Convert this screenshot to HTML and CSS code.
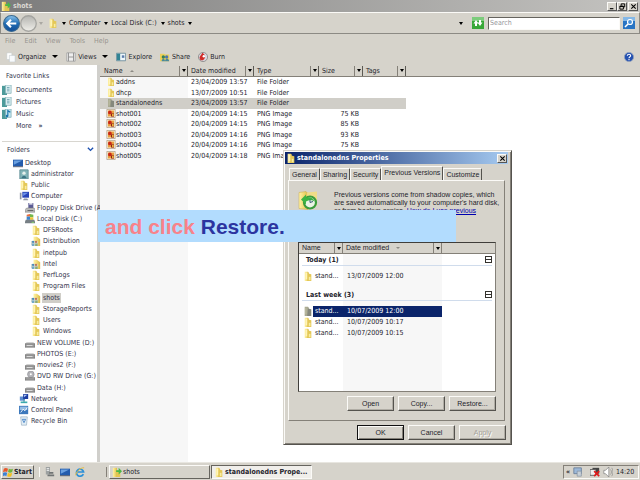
FILE: index.html
```html
<!DOCTYPE html>
<html lang="en">
<head>
<meta charset="utf-8">
<title>shots</title>
<link rel="stylesheet" href="styles.css">
</head>
<body>
<svg class="sprite" aria-hidden="true">
  <defs>
    <linearGradient id="gold" x1="0" x2="1"><stop offset="0" stop-color="#fff3a8"/><stop offset=".55" stop-color="#f0d870"/><stop offset="1" stop-color="#d8b848"/></linearGradient>
    <linearGradient id="blue" x1="0" y1="0" x2="0" y2="1"><stop offset="0" stop-color="#8cc4ec"/><stop offset=".5" stop-color="#1f6cb4"/><stop offset="1" stop-color="#124c94"/></linearGradient>
    <linearGradient id="silver" x1="0" y1="0" x2="0" y2="1"><stop offset="0" stop-color="#b4b4b0"/><stop offset="1" stop-color="#f0efea"/></linearGradient>
  </defs>
  <symbol id="folder" viewBox="0 0 12 12"><path d="M2 1h4l1 1v10H2z" fill="url(#gold)"/><path d="M6 3l4 1v8H5z" fill="#e4c858"/><path d="M3 2h2v8H3z" fill="#fff4b8"/><path d="M7 7h2v4H7z" fill="#f8eca0"/></symbol>
  <symbol id="folder-gray" viewBox="0 0 12 12"><path d="M2 1h4l1 1v10H2z" fill="#a8a890"/><path d="M6 3l4 1v8H5z" fill="#85887c"/><path d="M3 2h1v8H3z" fill="#c4c4a8"/></symbol>
  <symbol id="folder-green" viewBox="0 0 12 12"><path d="M1 1h5v11H1z" fill="url(#gold)"/><path d="M6 4l4 1v7H5z" fill="#e5c650"/><path d="M5 6V4h3V1l4 4-4 4V6z" fill="#48b848"/></symbol>
  <symbol id="folder-shared" viewBox="0 0 12 12"><path d="M3 1h4l4 3v8H3z" fill="url(#gold)"/><path d="M0 6h8v5H0z" fill="#d5d9d0"/><circle cx="2.5" cy="7" r="1.4" fill="#4c8cb8"/><circle cx="6" cy="7" r="1.4" fill="#c07858"/><path d="M1 9h3v3H1z" fill="#73a9c9"/><path d="M5 9h3v3H5z" fill="#8aaa78"/></symbol>
  <symbol id="png" viewBox="0 0 12 12"><path d="M.5.500h11v11H.5z" fill="#fff3dc" stroke="#a89880"/><path d="M2 2h8v8H2z" fill="#e8a040"/><circle cx="4.500" cy="4.500" r="2.500" fill="#c82818"/><path d="M6 6h4v4H6z" fill="#8c1c18"/><circle cx="8.500" cy="8" r="1.300" fill="#f8d040"/></symbol>
  <symbol id="doc" viewBox="0 0 12 12"><path d="M0 1h6v11H0z" fill="#4d9b9b"/><path d="M4 0h7v10H4z" fill="#d9eef0" stroke="#6c9ea6" stroke-width=".7"/><path d="M6 3h3M6 5h3M6 7h3" stroke="#6aa0b0"/></symbol>
  <symbol id="music" viewBox="0 0 12 12"><path d="M0 1h6v11H0z" fill="#4d9b9b"/><path d="M4 0h7v10H4z" fill="#c4e5ee" stroke="#6c9ea6" stroke-width=".7"/><path d="M7 8V2l3 2" fill="none" stroke="#1c78b0" stroke-width="1.400"/><circle cx="6" cy="8.500" r="1.600" fill="#1c78b0"/></symbol>
  <symbol id="desktop" viewBox="0 0 12 12"><path d="M0 2h12v8H0z" fill="#245cac"/><path d="M1 3h10L1 8z" fill="#6aa0e0"/><path d="M0 10h12v1H0z" fill="#424c60"/></symbol>
  <symbol id="user" viewBox="0 0 12 12"><path d="M1 1h10v11H1z" fill="#82b4b8" stroke="#5c8c94"/><circle cx="6" cy="5" r="2" fill="#e6f0ec"/><path d="M3 11c0-4 6-4 6 0z" fill="#3c7484"/></symbol>
  <symbol id="computer" viewBox="0 0 12 12"><path d="M1 2h2v8H1z" fill="#8c94a4"/><path d="M4 1h8v7H4z" fill="#2844b8"/><path d="M5 2h6L5 6z" fill="#6c94e8"/><path d="M6 9h4v1h1v1H5v-1h1z" fill="#8c94a4"/></symbol>
  <symbol id="floppy" viewBox="0 0 12 12"><path d="M4 0h6v6H4z" fill="#5c5c94"/><path d="M5 0h4v2H5z" fill="#dcdce8"/><path d="M2 6h9l1 2v3H0V8z" fill="#bcbcbc" stroke="#747474" stroke-width=".6"/><path d="M3 9h7" stroke="#555"/></symbol>
  <symbol id="disk-c" viewBox="0 0 12 12"><path d="M2 1l4-1v3H2z" fill="#e86c38"/><path d="M6 0l4 1v3H6z" fill="#74b84c"/><path d="M2 3h4v4H2z" fill="#3c84cc"/><path d="M6 4h4v3H6z" fill="#f4c438"/><path d="M1 7h10l1 2v2H0V9z" fill="#777f85"/><path d="M8 10h3" stroke="#8ce46c"/></symbol>
  <symbol id="drive" viewBox="0 0 12 12"><path d="M2 5h8l2 2v4H0V7z" fill="#c4c4c4"/><path d="M0 7h12v4H0z" fill="#9c9c9c" stroke="#686868" stroke-width=".7"/><path d="M2 9h7" stroke="#e8e8e8"/></symbol>
  <symbol id="dvd" viewBox="0 0 12 12"><circle cx="7" cy="4" r="4" fill="#b4b4b8" stroke="#84848c" stroke-width=".6"/><circle cx="7" cy="4" r="1.200" fill="#fff"/><path d="M0 8h12v3H0z" fill="#a0a0a0" stroke="#686868" stroke-width=".7"/></symbol>
  <symbol id="network" viewBox="0 0 12 12"><path d="M1 3h6v5H1z" fill="#5c8cd0"/><path d="M5 0h6v6H5z" fill="#1c3ca0"/><path d="M6 1h4L6 4z" fill="#a8c4f4"/><path d="M2 9h8v2H2z" fill="#3cacb0"/><path d="M6 6v4" stroke="#348c94"/></symbol>
  <symbol id="control" viewBox="0 0 12 12"><path d="M0 1h11v10H0z" fill="#3c78bc"/><path d="M1 2h9v4H1z" fill="#94bce4"/><path d="M2 9l3-4 2 2 3-4" fill="none" stroke="#fff"/></symbol>
  <symbol id="bin" viewBox="0 0 12 12"><path d="M2 1h8l-1 10H3z" fill="#e2eef6" stroke="#8ca4b8" stroke-width=".7"/><path d="M4 4h4L6 8z" fill="none" stroke="#3c7cc4"/></symbol>
  <symbol id="back" viewBox="0 0 16 16"><circle cx="8" cy="8" r="7.500" fill="url(#blue)" stroke="#3b6a90"/><path d="M12.500 8H4M7.500 4.500L4 8l3.500 3.500" fill="none" stroke="#fff" stroke-width="2"/></symbol>
  <symbol id="forward" viewBox="0 0 16 16"><circle cx="8" cy="8" r="7.300" fill="url(#silver)" stroke="#a4a4a0" stroke-width="1.200"/></symbol>
  <symbol id="refresh" viewBox="0 0 12 12"><path d="M0 0h12v12H0z" fill="#38a838"/><path d="M0 0h12v4H0z" fill="#7ccc7c"/><path d="M10.500 5.500L8 9 5.500 5.500H7V3h2v2.500zM1.500 6.500L4 3l2.500 3.500H5V9H3V6.500z" fill="#fff"/></symbol>
  <symbol id="search" viewBox="0 0 12 12"><path d="M0 0h12v12H0z" fill="#2874c4"/><path d="M0 0h12v4H0z" fill="#84b8e8"/><circle cx="7" cy="5" r="2.500" fill="#4890d8" stroke="#fff" stroke-width="1.200"/><path d="M5 7L2 10" stroke="#fff" stroke-width="1.600"/></symbol>
  <symbol id="organize" viewBox="0 0 12 12"><path d="M1 1h6v8H1z" fill="#fff" stroke="#c2c8cc" stroke-width=".6"/><path d="M4 4h7v8H4z" fill="#f8fafc" stroke="#b4bcc2" stroke-width=".6"/></symbol>
  <symbol id="views" viewBox="0 0 12 12"><path d="M1 1h10v10H1z" fill="#eee" stroke="#a0a0a0"/><path d="M3 1v10M9 1v10M3 6h6" stroke="#888"/></symbol>
  <symbol id="explore" viewBox="0 0 12 12"><path d="M.5 1.500h11v9H.5z" fill="#eef6fa" stroke="#688898"/><path d="M1 2h4v8H1z" fill="#328494"/><path d="M7 4h3v3H7z" fill="#5c7cac"/></symbol>
  <symbol id="share" viewBox="0 0 12 12"><path d="M0 2h5l1 1h5v8H0z" fill="#ecd058"/><circle cx="4" cy="6" r="2" fill="#388058"/><circle cx="8" cy="6" r="2" fill="#4c74b0"/><path d="M2 11c0-4 4-4 4 0M6 11c0-4 5-4 5 0" fill="#48889c"/></symbol>
  <symbol id="burn" viewBox="0 0 12 12"><circle cx="6" cy="6" r="5.500" fill="#d8d8e0" stroke="#888"/><path d="M3 10C0 5 4 5 5 1c4 2 5 6 1 9z" fill="#d02c28"/><circle cx="7" cy="5" r="1.500" fill="#fff"/></symbol>
  <symbol id="help" viewBox="0 0 12 12"><circle cx="6" cy="6" r="5.500" fill="#2450b0" stroke="#90a0bc"/><path d="M4 4.500c0-2.500 4-2.500 4 0 0 1.500-2 1-2 3M6 8.500v1.300" fill="none" stroke="#fff" stroke-width="1.300"/></symbol>
  <symbol id="history" viewBox="0 0 20 20"><path d="M1 2l7-1 2 2v16l-9-1z" fill="url(#gold)" stroke="#c8a848" stroke-width=".5"/><path d="M9 2l10-1v14l-9 4z" fill="#efdc88"/><circle cx="12" cy="12" r="6" fill="#eaf4e4" stroke="#3a9c3c" stroke-width="2.200"/><path d="M3 9l5-5v3c4-1 7 0 9 4-3-2-6-2-9 0v3z" fill="#3eb444"/><path d="M12 9v3l3-1" fill="none" stroke="#345c74"/></symbol>
  <symbol id="flag" viewBox="0 0 12 12"><path d="M1 2c2-1.500 3-1 5 0L5 6C4 5 2 5 0 6z" fill="#e8582c"/><path d="M7 2c2 1 3 1 5 0l-1 4c-2 1-3 1-5 0z" fill="#70b43c"/><path d="M0 7c2-1 3-1 5 0l-1 4c-1-1-3-1-4 0z" fill="#3c80d4"/><path d="M6 7c1 1 3 1 5 0l-1 4c-2 1-3 1-5 0z" fill="#f4c020"/></symbol>
  <symbol id="server" viewBox="0 0 12 12"><path d="M1 0h5v9H1z" fill="#9ca0a0"/><path d="M2 2h3M2 4h3" stroke="#fff"/><path d="M5 6h5v2H5zM3 9h8v2H3z" fill="#707474"/></symbol>
  <symbol id="ie" viewBox="0 0 12 12"><path d="M10 8.500A4.300 4.300 0 1 1 10.300 6H3" fill="none" stroke="#2c90d8" stroke-width="2"/><path d="M1 10C0 7 7 0 11 1" fill="none" stroke="#e8bc3c" stroke-width="1.200"/></symbol>
  <symbol id="monitor" viewBox="0 0 12 12"><path d="M1 1h9v7H1z" fill="#9cb8d8" stroke="#667c98"/><path d="M5 5h5v6H5z" fill="#c8d0d8" stroke="#788898" stroke-width=".7"/></symbol>
  <symbol id="offline" viewBox="0 0 12 12"><path d="M3 1h8v7H3z" fill="#444"/><path d="M0 3h7v7H0z" fill="#eee" stroke="#555"/><path d="M5 5l6 6M11 5l-6 6" stroke="#e01c1c" stroke-width="2"/></symbol>
  <symbol id="sound" viewBox="0 0 12 12"><path d="M1 4h2l4-4v12L3 8H1z" fill="#fff" stroke="#777" stroke-width=".8"/><path d="M9 3c1.500 2 1.500 4 0 6M10.500 1c2 3 2 7 0 10" fill="none" stroke="#888" stroke-width=".8"/></symbol>
</svg>

<div class="screen">
  <header class="titlebar">
    <svg class="icon"><use href="#folder-green"/></svg>
    <h1>shots</h1>
    <div class="window-buttons">
      <button class="wbtn" aria-label="Minimize"><svg viewBox="0 0 8 8"><path d="M1 6.500h4" stroke="#000" stroke-width="1.300"/></svg></button>
      <button class="wbtn" aria-label="Restore"><svg viewBox="0 0 8 8"><path d="M2.500 3V1h4v3.500H5M1 3.500h4V7H1zM1 4h4" fill="none" stroke="#000" stroke-width="1.100"/></svg></button>
      <button class="wbtn close" aria-label="Close"><svg viewBox="0 0 8 8"><path d="M1.500 1.500l5 5M6.500 1.500l-5 5" stroke="#000" stroke-width="1.200"/></svg></button>
    </div>
  </header>

  <div class="addressbar">
    <button class="nav" aria-label="Back"><svg><use href="#back"/></svg></button>
    <button class="nav" aria-label="Forward"><svg><use href="#forward"/></svg></button>
    <i class="caret hollow"></i>
    <nav class="crumbs" aria-label="Address">
      <svg class="icon"><use href="#folder"/></svg>
      <i class="caret"></i><a href="#">Computer</a>
      <i class="caret"></i><a href="#">Local Disk (C:)</a>
      <i class="caret"></i><a href="#">shots</a>
      <i class="caret"></i>
    </nav>
    <i class="caret end"></i>
    <button class="square" aria-label="Refresh"><svg><use href="#refresh"/></svg></button>
    <input class="search" type="text" placeholder="Search" aria-label="Search">
    <button class="square" aria-label="Go"><svg><use href="#search"/></svg></button>
  </div>

  <nav class="menubar">
    <button>File</button><button>Edit</button><button>View</button><button>Tools</button><button>Help</button>
  </nav>

  <div class="toolbar">
    <button class="tool"><svg class="icon"><use href="#organize"/></svg>Organize<i class="caret"></i></button>
    <button class="tool"><svg class="icon"><use href="#views"/></svg>Views<i class="caret"></i></button>
    <button class="tool"><svg class="icon"><use href="#explore"/></svg>Explore</button>
    <button class="tool"><svg class="icon"><use href="#share"/></svg>Share</button>
    <button class="tool"><svg class="icon"><use href="#burn"/></svg>Burn</button>
    <button class="tool help" aria-label="Help"><svg class="icon"><use href="#help"/></svg></button>
  </div>

  <div class="content">
    <aside class="sidebar">
      <section class="favorites">
        <h2>Favorite Links</h2>
        <a href="#"><svg class="icon"><use href="#doc"/></svg>Documents</a>
        <a href="#"><svg class="icon"><use href="#doc"/></svg>Pictures</a>
        <a href="#"><svg class="icon"><use href="#music"/></svg>Music</a>
        <a href="#" class="more">More <b>»</b></a>
      </section>
      <section class="folders">
        <h2>Folders <svg viewBox="0 0 8 8"><path d="M1 2l3 3 3-3" fill="none" stroke="#1c50b0" stroke-width="1.600"/></svg></h2>
        <div class="tree">
          <a href="#" class="l0"><svg class="icon"><use href="#desktop"/></svg><span>Desktop</span></a>
          <a href="#" class="l1"><svg class="icon"><use href="#user"/></svg><span>administrator</span></a>
          <a href="#" class="l1"><svg class="icon"><use href="#folder"/></svg><span>Public</span></a>
          <a href="#" class="l1"><svg class="icon"><use href="#computer"/></svg><span>Computer</span></a>
          <a href="#" class="l2"><svg class="icon"><use href="#floppy"/></svg><span>Floppy Disk Drive (A</span></a>
          <a href="#" class="l2"><svg class="icon"><use href="#disk-c"/></svg><span>Local Disk (C:)</span></a>
          <a href="#" class="l3"><svg class="icon"><use href="#folder"/></svg><span>DFSRoots</span></a>
          <a href="#" class="l3"><svg class="icon"><use href="#folder-shared"/></svg><span>Distribution</span></a>
          <a href="#" class="l3"><svg class="icon"><use href="#folder"/></svg><span>inetpub</span></a>
          <a href="#" class="l3"><svg class="icon"><use href="#folder-shared"/></svg><span>Intel</span></a>
          <a href="#" class="l3"><svg class="icon"><use href="#folder"/></svg><span>PerfLogs</span></a>
          <a href="#" class="l3"><svg class="icon"><use href="#folder"/></svg><span>Program Files</span></a>
          <a href="#" class="l3 current"><svg class="icon"><use href="#folder-shared"/></svg><span>shots</span></a>
          <a href="#" class="l3"><svg class="icon"><use href="#folder"/></svg><span>StorageReports</span></a>
          <a href="#" class="l3"><svg class="icon"><use href="#folder"/></svg><span>Users</span></a>
          <a href="#" class="l3"><svg class="icon"><use href="#folder"/></svg><span>Windows</span></a>
          <a href="#" class="l2"><svg class="icon"><use href="#drive"/></svg><span>NEW VOLUME (D:)</span></a>
          <a href="#" class="l2"><svg class="icon"><use href="#drive"/></svg><span>PHOTOS (E:)</span></a>
          <a href="#" class="l2"><svg class="icon"><use href="#drive"/></svg><span>movies2 (F:)</span></a>
          <a href="#" class="l2"><svg class="icon"><use href="#dvd"/></svg><span>DVD RW Drive (G:)</span></a>
          <a href="#" class="l2"><svg class="icon"><use href="#drive"/></svg><span>Data (H:)</span></a>
          <a href="#" class="l1"><svg class="icon"><use href="#network"/></svg><span>Network</span></a>
          <a href="#" class="l1"><svg class="icon"><use href="#control"/></svg><span>Control Panel</span></a>
          <a href="#" class="l1"><svg class="icon"><use href="#bin"/></svg><span>Recycle Bin</span></a>
        </div>
      </section>
    </aside>

    <main class="files">
      <table>
        <colgroup><col class="c-name"><col class="c-date"><col class="c-type"><col class="c-size"><col class="c-tags"><col></colgroup>
        <thead>
          <tr>
            <th><div>Name<i class="sort up"></i><button aria-label="Filter name"><i class="caret"></i></button></div></th>
            <th><div>Date modified<button aria-label="Filter date"><i class="caret"></i></button></div></th>
            <th><div>Type<button aria-label="Filter type"><i class="caret"></i></button></div></th>
            <th><div>Size<button aria-label="Filter size"><i class="caret"></i></button></div></th>
            <th><div>Tags<button aria-label="Filter tags"><i class="caret"></i></button></div></th>
            <th></th>
          </tr>
        </thead>
        <tbody>
          <tr><td><svg class="icon"><use href="#folder"/></svg>addns</td><td>23/04/2009 13:57</td><td>File Folder</td><td></td><td></td><td></td></tr>
          <tr><td><svg class="icon"><use href="#folder"/></svg>dhcp</td><td>13/07/2009 10:51</td><td>File Folder</td><td></td><td></td><td></td></tr>
          <tr class="selected"><td><svg class="icon"><use href="#folder-gray"/></svg>standalonedns</td><td>23/04/2009 13:57</td><td>File Folder</td><td></td><td></td><td></td></tr>
          <tr><td><svg class="icon"><use href="#png"/></svg>shot001</td><td>20/04/2009 14:15</td><td>PNG Image</td><td>75 KB</td><td></td><td></td></tr>
          <tr><td><svg class="icon"><use href="#png"/></svg>shot002</td><td>20/04/2009 14:15</td><td>PNG Image</td><td>85 KB</td><td></td><td></td></tr>
          <tr><td><svg class="icon"><use href="#png"/></svg>shot003</td><td>20/04/2009 14:16</td><td>PNG Image</td><td>93 KB</td><td></td><td></td></tr>
          <tr><td><svg class="icon"><use href="#png"/></svg>shot004</td><td>20/04/2009 14:16</td><td>PNG Image</td><td>75 KB</td><td></td><td></td></tr>
          <tr><td><svg class="icon"><use href="#png"/></svg>shot005</td><td>20/04/2009 14:18</td><td>PNG Image</td><td></td><td></td><td></td></tr>
        </tbody>
      </table>
    </main>
  </div>

  <footer class="taskbar">
    <button class="start"><svg class="icon"><use href="#flag"/></svg>Start</button>
    <div class="quick">
      <a href="#" aria-label="Server Manager"><svg class="icon"><use href="#server"/></svg></a>
      <a href="#" aria-label="Show desktop"><svg class="icon"><use href="#desktop"/></svg></a>
      <a href="#" aria-label="Internet Explorer"><svg class="icon"><use href="#ie"/></svg></a>
    </div>
    <button class="task"><svg class="icon"><use href="#folder-green"/></svg>shots</button>
    <button class="task active"><svg class="icon"><use href="#folder"/></svg>standalonedns Prope...</button>
    <div class="tray">
      <b>«</b>
      <svg class="icon"><use href="#monitor"/></svg>
      <svg class="icon net"><use href="#offline"/></svg>
      <svg class="icon"><use href="#sound"/></svg>
      <time>14:20</time>
    </div>
  </footer>

  <section class="dialog" role="dialog" aria-labelledby="dialog-title">
    <header>
      <svg class="icon"><use href="#folder"/></svg>
      <h2 id="dialog-title">standalonedns Properties</h2>
      <button class="wbtn" aria-label="Close dialog"><svg viewBox="0 0 8 8"><path d="M1.500 1.500l5 5M6.500 1.500l-5 5" stroke="#000" stroke-width="1.200"/></svg></button>
    </header>
    <div class="tabs" role="tablist">
      <button role="tab">General</button><button role="tab">Sharing</button><button role="tab">Security</button><button role="tab" class="on" aria-selected="true">Previous Versions</button><button role="tab">Customize</button>
    </div>
    <div class="panel">
      <div class="intro">
        <svg><use href="#history"/></svg>
        <p>Previous versions come from shadow copies, which<br>are saved automatically to your computer's hard disk,<br>or from backup copies. <a href="#">How do I use previous<br>versions?</a></p>
      </div>
      <div class="versions">
        <div class="vhead">
          <div>Name<button aria-label="Filter name"><i class="caret"></i></button></div>
          <div>Date modified<i class="sort"></i><button aria-label="Filter date"><i class="caret"></i></button></div>
          <div></div>
        </div>
        <div class="vbody">
          <h3>Today (1)<button class="collapse" aria-label="Collapse today"></button></h3>
          <div class="vrow"><svg class="icon"><use href="#folder"/></svg><span>stand...</span><span>13/07/2009 12:00</span></div>
          <h3>Last week (3)<button class="collapse" aria-label="Collapse last week"></button></h3>
          <div class="vrow picked"><svg class="icon"><use href="#folder-gray"/></svg><span>stand...</span><span>10/07/2009 12:00</span></div>
          <div class="vrow"><svg class="icon"><use href="#folder"/></svg><span>stand...</span><span>10/07/2009 10:17</span></div>
          <div class="vrow"><svg class="icon"><use href="#folder"/></svg><span>stand...</span><span>10/07/2009 10:15</span></div>
        </div>
      </div>
      <div class="actions">
        <button class="push">Open</button><button class="push">Copy...</button><button class="push">Restore...</button>
      </div>
    </div>
    <div class="actions bottom">
      <button class="push default">OK</button><button class="push">Cancel</button><button class="push" disabled>Apply</button>
    </div>
  </section>

  <p class="caption"><span>and click</span> Restore.</p>
</div>
</body>
</html>
```

FILE: styles.css
```css
:root {
  --face: #d6d3cb;
  --light: #fbfaf7;
  --shadow: #848078;
  --ink: #24242c;
  --ui: "DejaVu Sans Condensed", "Noto Sans", sans-serif;
}

* { box-sizing: border-box; }

body {
  margin: 0;
  background: #fff;
  color: var(--ink);
  font: 7px/10px var(--ui);
}

h1, h2, h3, p { margin: 0; font-size: inherit; }
a { color: inherit; text-decoration: none; }

button {
  margin: 0;
  padding: 0;
  border: 0;
  background: none;
  color: inherit;
  font: inherit;
  white-space: nowrap;
}

svg { display: block; flex: none; }
.sprite { position: absolute; width: 0; height: 0; }
.icon { width: 10px; height: 10px; }

.caret {
  flex: none;
  width: 0;
  height: 0;
  border: 2px solid transparent;
  border-top: 3px solid #000;
  border-bottom: 0;
}
.caret.hollow { border-top-color: #aaa8a2; }

.screen {
  position: relative;
  display: flex;
  flex-direction: column;
  min-height: 100vh;
  overflow: hidden;
}

/* Window frame */
.titlebar {
  display: flex;
  align-items: center;
  gap: 2px;
  height: 12px;
  padding: 0 2px 0 1px;
  background: linear-gradient(90deg, #7c7c7c, #c4c3c0);
}
.titlebar h1 { flex: 1; color: #dcdad4; font-weight: bold; }
.window-buttons { display: flex; }
.wbtn {
  display: grid;
  place-items: center;
  width: 10px;
  height: 9px;
  border: 1px solid;
  border-color: var(--light) #555 #555 var(--light);
  background: var(--face);
}
.wbtn svg { width: 7px; height: 7px; }
.wbtn.close { margin-left: 1px; }

.addressbar {
  display: flex;
  align-items: center;
  height: 22px;
  padding: 0 4px 0 2px;
  border: 1px solid;
  border-color: var(--light) #8c8a84 #8c8a84 #8c8a84;
  background: var(--face);
}
.nav svg { width: 17px; height: 17px; }
.addressbar > .caret { margin-left: 2px; }
.crumbs { display: flex; flex: 1; align-items: center; gap: 3px; margin-left: 5px; }
.crumbs .caret { margin-left: 1px; }
.addressbar > .end { margin-right: 9px; }
.square svg { width: 12px; height: 12px; }
.search {
  width: 132px;
  height: 13px;
  margin: 0 3px 0 4px;
  padding: 0 1px;
  border: 1px solid;
  border-color: #66645e var(--light) var(--light) #66645e;
  border-radius: 0;
  background: #fff;
  font: inherit;
}
.search::placeholder { color: #96969a; opacity: 1; }

.menubar {
  display: flex;
  gap: 9px;
  height: 14px;
  padding: 0 5px;
  background: var(--face);
  color: #96948e;
}

.toolbar {
  display: flex;
  align-items: center;
  gap: 8px;
  height: 17px;
  padding: 0 6px;
  background: var(--face);
}
.tool { display: flex; align-items: center; gap: 2px; }
.tool .caret { margin-left: 4px; border-width: 3px 3px 0; }
.help { margin-left: auto; }

.content { display: flex; flex: 1; background: #fff; }

/* Navigation pane */
.sidebar {
  flex: none;
  width: 100px;
  padding-left: 2px;
  border-right: 3px solid #d0cfcb;
  color: #34344c;
}
.sidebar h2 { font-weight: normal; }
.favorites { height: 77px; padding-top: 6px; border-bottom: 1px solid #d8d6d0; }
.favorites h2 { padding-left: 4px; }
.favorites a { display: flex; align-items: center; gap: 4px; height: 12px; }
.favorites h2 + a { margin-top: 3px; }
.favorites .more { gap: 7px; padding-left: 14px; }
.folders h2 {
  display: flex;
  align-items: center;
  justify-content: space-between;
  height: 15px;
  padding: 0 3px 0 5px;
}
.folders h2 svg { width: 7px; height: 7px; }
.tree {
  display: grid;
  grid-auto-rows: 1fr;
  height: 270px;
}
.tree a { display: flex; align-items: center; gap: 2px; white-space: nowrap; }
.l0 { padding-left: 11px; }
.l1 { padding-left: 17px; }
.l2 { padding-left: 23px; }
.l3 { padding-left: 29px; }
.tree .current span { margin-left: -1px; padding: 0 1px; background: #d0cec8; }

/* File list */
.files { flex: 1; background: linear-gradient(90deg, #f7f7f7 88px, #fff 88px); }
.files table { width: 100%; border-collapse: collapse; table-layout: fixed; }
.c-name { width: 88px; }
.c-date { width: 66px; }
.c-type { width: 65px; }
.c-size { width: 44px; }
.c-tags { width: 43px; }
.files th {
  height: 11px;
  padding: 0;
  border-bottom: 1px solid var(--shadow);
  background: var(--face);
  font-weight: normal;
  text-align: left;
}
.files th > div { display: flex; align-items: center; height: 11px; padding-left: 3px; }
.files th:first-child > div { padding-left: 4px; }
.files th button, .vhead button {
  display: grid;
  place-items: center;
  width: 9px;
  height: 10px;
  margin-left: auto;
  border-right: 1px solid var(--shadow);
  border-left: 1px solid var(--shadow);
}
.files th button { border-right-color: #5c5a54; }
.sort {
  margin-left: 7px;
  border: 2px solid transparent;
  border-top-color: #8c8a84;
  border-bottom: 0;
}
.sort.up { border-top: 0; border-bottom: 2px solid #8c8a84; }
.files tbody { white-space: nowrap; }
.files tbody tr:nth-child(odd) { height: 11px; }
.files tbody tr:nth-child(even) { height: 10px; }
.files td { padding: 0 3px; line-height: 10px; }
.files td:first-child { padding-left: 6px; }
.files td:nth-child(4) { padding-right: 4px; text-align: right; }
.files td .icon { display: inline-block; height: 9px; vertical-align: top; }
.selected td:not(:last-child) { background: #d0cec8; }

/* Properties dialog */
.dialog {
  position: absolute;
  top: 150px;
  left: 283px;
  width: 229px;
  padding: 1px 3px 4px 1px;
  border: 1px solid;
  border-color: var(--face) #55534e #55534e var(--face);
  background: var(--face);
  box-shadow: inset 1px 1px var(--light), inset -1px -1px var(--shadow);
}
.dialog > header {
  display: flex;
  align-items: center;
  gap: 1px;
  height: 12px;
  padding: 0 1px;
  background: linear-gradient(90deg, #0a246a, #a6caf0);
  color: #fff;
}
.dialog > header h2 { flex: 1; font-weight: bold; }
.tabs {
  display: flex;
  align-items: flex-end;
  height: 16px;
  margin-left: 4px;
  font-family: "Liberation Sans", sans-serif;
}
.tabs button {
  height: 12px;
  padding: 0 2px;
  border: 1px solid;
  border-color: var(--light) #55534e transparent var(--light);
  border-bottom: 0;
  border-radius: 1px 1px 0 0;
}
.tabs .on { height: 14px; padding-bottom: 2px; background: var(--face); }
.panel {
  margin: 0 3px;
  padding: 9px 8px 9px 9px;
  border: 1px solid;
  border-color: var(--light) var(--shadow) var(--shadow) var(--light);
  font-family: "Liberation Sans", sans-serif;
}
.intro { display: flex; gap: 16px; height: 52px; line-height: 8px; white-space: nowrap; }
.intro p { padding-top: 1px; }
.intro svg { width: 20px; height: 21px; }
.intro a { color: #0000b0; text-decoration: underline; }
.versions {
  height: 150px;
  border: 1px solid #403e3a;
  border-right-color: var(--shadow);
  border-bottom-color: var(--shadow);
  background: linear-gradient(90deg, #fff 44px, #f7f7f7 44px, #f7f7f7 143px, #fff 143px);
}
.vhead {
  display: grid;
  grid-template-columns: 44px 99px 1fr;
  height: 11px;
  border-bottom: 1px solid var(--shadow);
  background: var(--face);
}
.vhead div { display: flex; align-items: center; padding-left: 3px; }
.vbody { padding: 0 3px; font-family: var(--ui); }
.vbody h3 {
  display: flex;
  align-items: center;
  height: 12px;
  margin-bottom: 5px;
  padding-left: 4px;
  border-bottom: 1px solid #d0dcec;
}
.vbody .vrow + h3 { margin-top: 7px; }
.collapse {
  width: 7px;
  height: 7px;
  margin-left: auto;
  border: 1px solid #34322e;
  background: linear-gradient(#fff 2px, #34322e 2px, #34322e 3px, #fff 3px);
}
.vrow {
  display: grid;
  grid-template-columns: 10px 33px 96px;
  height: 11px;
  padding-left: 1px;
  white-space: nowrap;
}
.vrow span { padding-left: 2px; }
.vrow span:last-child { padding-left: 1px; }
.picked span { background: #0a246a; color: #fff; }

.actions {
  display: flex;
  justify-content: flex-end;
  gap: 4px;
  margin-top: 4px;
  font-family: "Liberation Sans", sans-serif;
}
.actions.bottom { margin-right: 2px; }
.push {
  width: 47px;
  height: 15px;
  border: 1px solid;
  border-color: var(--light) #55534e #55534e var(--light);
  background: var(--face);
  box-shadow: inset -1px -1px #b0ada5;
}
.push.default { border-color: #111; box-shadow: inset 1px 1px var(--light), inset -1px -1px var(--shadow); }
.push:disabled { color: #a4a198; text-shadow: 1px 1px #fff; }

/* Caption band */
.caption {
  position: absolute;
  top: 210px;
  left: 98px;
  width: 358px;
  padding: 5px 7px 3px;
  background: #b2dcfe;
  color: #2c34a0;
  font: bold 21px/24px "Liberation Sans", sans-serif;
}
.caption span { color: #f8828a; }

/* Taskbar */
.taskbar {
  display: flex;
  align-items: center;
  height: 18px;
  padding: 2px 1px 1px;
  border-top: 1px solid #e8e6e0;
  background: var(--face);
}
.start, .task {
  display: flex;
  align-items: center;
  gap: 1px;
  height: 14px;
  border: 1px solid;
  border-color: var(--light) #66645e #66645e var(--light);
}
.start { width: 33px; padding-left: 1px; font-weight: bold; }
.quick {
  display: flex;
  gap: 5px;
  width: 68px;
  margin: 0 2px 0 5px;
  padding-left: 5px;
  border-right: 1px solid var(--shadow);
  border-left: 1px solid var(--light);
}
.task { width: 101px; margin-right: 1px; padding-left: 2px; }
.task.active {
  border-color: #66645e var(--light) var(--light) #66645e;
  background: #f0eeea;
  font-weight: bold;
}
.tray {
  display: flex;
  align-items: center;
  gap: 3px;
  width: 76px;
  height: 14px;
  margin-left: auto;
  padding: 0 4px 0 2px;
  border: 1px solid;
  border-color: var(--shadow) var(--light) var(--light) var(--shadow);
}
.tray .net { margin-left: 4px; }
.tray time { margin-left: auto; }
```
